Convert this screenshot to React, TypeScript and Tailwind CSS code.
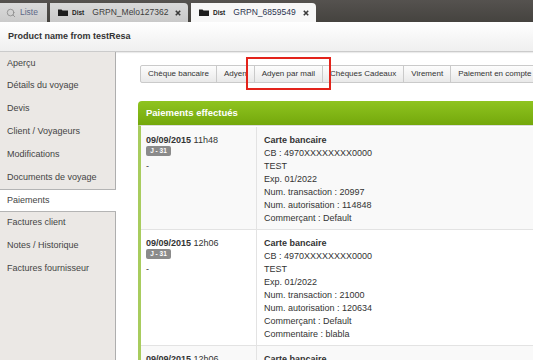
import { Search } from "lucide-react";

type Payment = {
  date: string;
  time: string;
  lines: string[];
  alt: boolean;
};

const MENU = [
  "Aperçu",
  "Détails du voyage",
  "Devis",
  "Client / Voyageurs",
  "Modifications",
  "Documents de voyage",
  "Paiements",
  "Factures client",
  "Notes / Historique",
  "Factures fournisseur",
];

const METHODS = [
  "Chèque bancaire",
  "Adyen",
  "Adyen par mail",
  "Chèques Cadeaux",
  "Virement",
  "Paiement en compte",
];

const PAYMENTS: Payment[] = [
  {
    date: "09/09/2015",
    time: "11h48",
    alt: true,
    lines: [
      "CB : 4970XXXXXXXX0000",
      "TEST",
      "Exp. 01/2022",
      "Num. transaction : 20997",
      "Num. autorisation : 114848",
      "Commerçant : Default",
    ],
  },
  {
    date: "09/09/2015",
    time: "12h06",
    alt: false,
    lines: [
      "CB : 4970XXXXXXXX0000",
      "TEST",
      "Exp. 01/2022",
      "Num. transaction : 21000",
      "Num. autorisation : 120634",
      "Commerçant : Default",
      "Commentaire : blabla",
    ],
  },
  {
    date: "09/09/2015",
    time: "12h06",
    alt: true,
    lines: ["CB : 4970XXXXXXXX0000", "TEST"],
  },
];

function FolderIcon() {
  return (
    <svg width="10" height="7" viewBox="0 0 10 7">
      <path d="M0 0.5 H3.5 L4.5 1.5 H10 V7 H0 Z" fill="#1e1e1e" />
    </svg>
  );
}

function CloseIcon() {
  return (
    <svg width="6" height="6" viewBox="0 0 6 6">
      <path d="M0.8 0.8 L5.2 5.2 M5.2 0.8 L0.8 5.2" stroke="#3a3a3a" strokeWidth="1.6" />
    </svg>
  );
}

function Tab({ label, active }: { label: string; active?: boolean }) {
  return (
    <div
      className={`h-[19px] flex items-center pl-[8px] pr-[7px] gap-[3px] rounded-tr-[4px] ${
        active ? "bg-[#f7f7f7] w-[125px] ml-[3px]" : "bg-gradient-to-b from-[#d9d9d9] to-[#c9c9c9] w-[138px]"
      }`}
    >
      <FolderIcon />
      <span className="text-[6.5px] font-bold text-[#222] ml-[1px]">Dist</span>
      <span className={`text-[8.5px] ml-[5px] ${active ? "text-[#2c3550]" : "text-[#3d3d3d]"}`}>{label}</span>
      <span className="ml-auto">
        <CloseIcon />
      </span>
    </div>
  );
}

export default function App() {
  return (
    <div className="w-[533px] h-[360px] overflow-hidden bg-white flex flex-col font-['Liberation_Sans',Arial,sans-serif] text-[#333]">
      {/* Tabs */}
      <div className="h-[22px] shrink-0 bg-gradient-to-b from-[#55524f] to-[#45433f] flex items-end">
        <div className="h-[19px] w-[47px] bg-gradient-to-b from-[#dadada] to-[#cbcbcb] flex items-center pl-[6px] gap-[4px]">
          <Search size={10} strokeWidth={2} className="text-[#8a8a8a]" />
          <span className="text-[8.5px] text-[#5d6888]">Liste</span>
        </div>
        <div className="w-[3px]" />
        <Tab label="GRPN_Melo127362" />
        <Tab label="GRPN_6859549" active />
      </div>

      {/* Header */}
      <div className="h-[30px] shrink-0 bg-gradient-to-b from-white to-[#efefef] border-b border-[#cbcbcb] shadow-[0_1px_1px_rgba(0,0,0,0.08)] flex items-center pl-[8px]">
        <span className="text-[9px] font-bold text-[#333]">Product name from testResa</span>
      </div>

      <div className="flex flex-1 min-h-0">
        {/* Sidebar */}
        <div className="w-[116px] shrink-0 flex flex-col bg-[#ebe8e5]">
          {MENU.map((item) =>
            item === "Paiements" ? (
              <div
                key={item}
                className="h-[23px] shrink-0 flex items-center pl-[7px] text-[9px] text-[#444] bg-white border-y border-[#b4b4b4]"
              >
                {item}
              </div>
            ) : (
              <div
                key={item}
                className="h-[22.8px] shrink-0 flex items-center pl-[7px] text-[9px] text-[#444] border-r border-[#aeaeae]"
              >
                {item}
              </div>
            )
          )}
          <div className="flex-1 border-r border-[#aeaeae]" />
        </div>

        {/* Main */}
        <div className="flex-1 min-w-0 overflow-hidden pl-[22px] pt-[13px]">
          <div className="relative flex ml-[2px] w-[600px]">
            {METHODS.map((m, i) => (
              <div
                key={m}
                className={`h-[18px] flex items-center px-[7px] text-[8px] text-[#333] whitespace-nowrap bg-gradient-to-b from-[#fdfdfd] to-[#e9e9e9] border border-[#cacaca] ${
                  i === 0 ? "rounded-l-[2px]" : "-ml-px"
                }`}
              >
                {m}
              </div>
            ))}
            {/* highlight annotation */}
            <div className="absolute left-[106px] top-[-8px] w-[85px] h-[33px] border-2 border-[#e3231b]" />
          </div>

          <div className="mt-[18px] w-[520px] rounded-tl-[4px] overflow-hidden">
            <div className="h-[24px] bg-gradient-to-b from-[#8fc41f] to-[#74a80b] flex items-center pl-[8px] pt-[1px]">
              <span className="text-[9.5px] font-bold text-white">Paiements effectués</span>
            </div>
            <div className="border-l-[3px] border-[#a8cc5e] border-t border-t-[#dcdcdc] pt-[1px]">
              {PAYMENTS.map((p, i) => (
                <div
                  key={i}
                  className={`grid grid-cols-[116px_1fr] border-b border-[#e3e3e3] text-[9px] leading-[13px] ${
                    p.alt ? "bg-[#f9f9f9]" : "bg-white"
                  }`}
                >
                  <div className="border-r border-[#e3e3e3] pl-[5px] pt-[7px]">
                    <div>
                      <span className="font-bold">{p.date}</span> {p.time}
                    </div>
                    <div className="mt-[-1px] w-[25px] h-[10px] rounded-[2px] bg-[#8b8b8b] text-white font-bold text-[6.5px] leading-[10px] text-center">
                      J - 31
                    </div>
                    <div className="mt-[4px]">-</div>
                  </div>
                  <div className="pl-[7px] pt-[7px] pb-[4px]">
                    <div className="font-bold">Carte bancaire</div>
                    {p.lines.map((l) => (
                      <div key={l}>{l}</div>
                    ))}
                  </div>
                </div>
              ))}
            </div>
          </div>
        </div>
      </div>
    </div>
  );
}
